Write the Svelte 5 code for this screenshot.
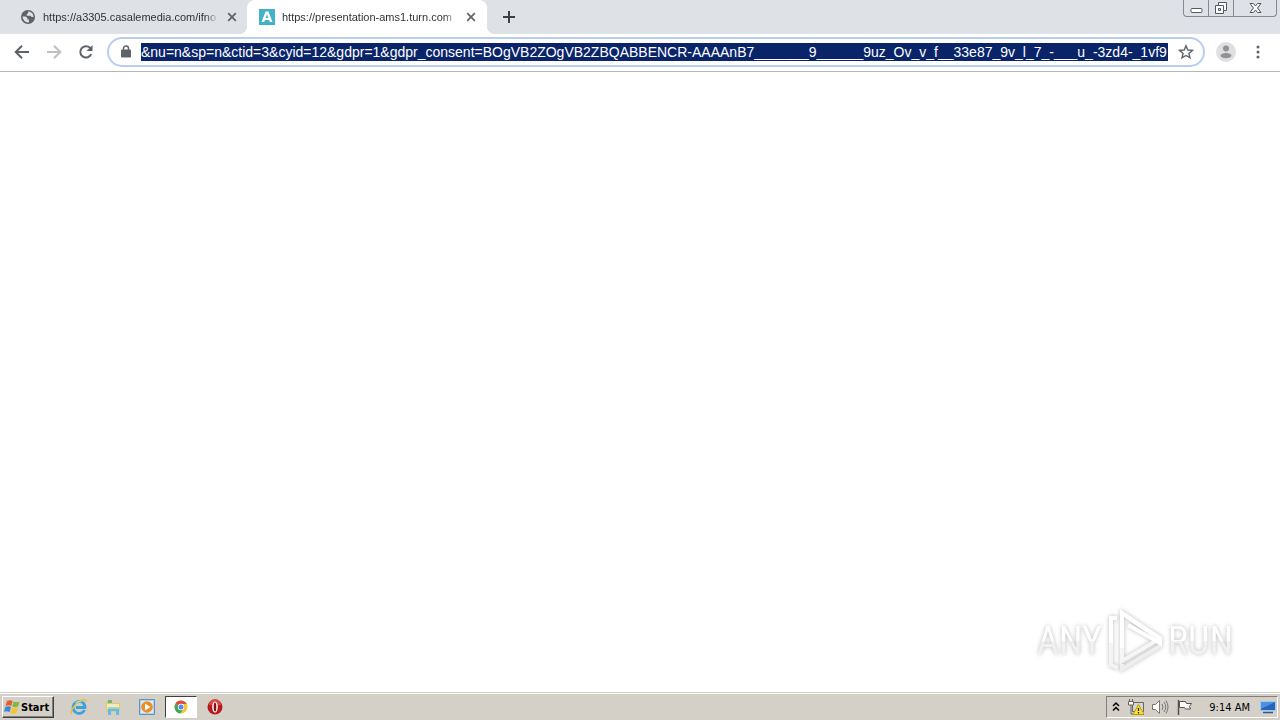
<script>
  const tabs = [
    { title: 'https://a3305.casalemedia.com/ifno', icon: 'globe', active: false },
    { title: 'https://presentation-ams1.turn.com', icon: 'a', active: true }
  ];
  let address = $state('&nu=n&sp=n&ctid=3&cyid=12&gdpr=1&gdpr_consent=BOgVB2ZOgVB2ZBQABBENCR-AAAAnB7_______9______9uz_Ov_v_f__33e87_9v_l_7_-___u_-3zd4-_1vf9');
</script>

<div class="screen">
  <header class="strip">
    <div class="tabs" role="tablist">
      {#each tabs as tab}
        <div class="tab" class:active={tab.active}>
          <button class="pick" role="tab" aria-selected={tab.active}>
            {#if tab.icon === 'globe'}
              <svg width="16" height="16" viewBox="0 0 16 16"><circle cx="8" cy="8" r="7" fill="#5f6368" /><path d="M2.5 7.5h3.2l1.7 1.6v1.5H9v2.7c-2.700.6-6-1.300-6.500-5.800zM8.200 2.500v1.400L6.800 5.200v1.500h3.700l1.100 1.200 1.900.2C13.600 4.700 10.900 2.500 8.200 2.500z" fill="#dee1e6" /></svg>
            {:else}
              <svg width="16" height="16" viewBox="0 0 16 16"><path d="M0 0h16v16H0z" fill="#43b1c9" /><path d="M6.600 2.500h2.800L13.500 13h-2.700l-.7-2H5.900l-.7 2H2.500zM8 5.300L6.700 9h2.600z" fill="#fff" fill-rule="evenodd" /></svg>
            {/if}
            <span class="title">{tab.title}</span>
          </button>
          <button class="close" aria-label="Close tab">
            <svg width="10" height="10" viewBox="0 0 10 10"><path d="M1.200 1.200l7.600 7.600M8.800 1.200L1.200 8.800" stroke="#5f6368" stroke-width="1.700" /></svg>
          </button>
        </div>
      {/each}
    </div>
    <button class="plain add" aria-label="New tab">
      <svg width="14" height="14" viewBox="0 0 14 14"><path d="M7 1v12M1 7h12" stroke="#3c4043" stroke-width="2" /></svg>
    </button>
    <div class="caption">
      <button aria-label="Minimize"><svg width="13" height="16" viewBox="0 0 13 16"><rect x="1" y="8.500" width="11" height="4" rx="1" fill="#fff" stroke="#555861" /></svg></button>
      <button aria-label="Restore"><svg width="14" height="16" viewBox="0 0 14 16"><path d="M4.500 2.500h8v8h-8z" fill="#fff" stroke="#555861" /><path d="M1.500 5.500h8v8h-8z" fill="#fff" stroke="#555861" /><path d="M4.500 8.500h2v2h-2z" fill="#dee1e6" stroke="#555861" /></svg></button>
      <button aria-label="Close"><svg width="13" height="16" viewBox="0 0 13 16"><path d="M1 3.500h3.500l2 2.500 2-2.500H12L8.500 8l3.500 4.500H8.500l-2-2.500-2 2.500H1L4.500 8z" fill="#fff" stroke="#555861" /></svg></button>
    </div>
  </header>

  <nav class="toolbar">
    <button class="plain" aria-label="Back"><svg width="16" height="16" viewBox="0 0 16 16"><path d="M15 8H2.500M8 1.700L1.700 8 8 14.300" fill="none" stroke="#5f6368" stroke-width="2" /></svg></button>
    <button class="plain" aria-label="Forward"><svg width="16" height="16" viewBox="0 0 16 16"><path d="M1 8h12.500M8 1.700L14.300 8 8 14.300" fill="none" stroke="#bdbfc2" stroke-width="2" /></svg></button>
    <button class="plain" aria-label="Reload"><svg width="16" height="16" viewBox="0 0 16 16"><path d="M13.200 10.200a5.700 5.700 0 1 1-1.100-6.300l1.400 1.500" fill="none" stroke="#5f6368" stroke-width="2" /><path d="M14.500 1v6h-6z" fill="#5f6368" /></svg></button>
    <div class="omnibox">
      <svg width="10" height="14" viewBox="0 0 10 14"><path d="M0.500 5h9v7h-9z" fill="#5f6368" stroke="#5f6368" stroke-linejoin="round" /><path d="M2.500 5V3.500a2.500 2.500 0 0 1 5 0V5" fill="none" stroke="#5f6368" stroke-width="1.500" /></svg>
      <input aria-label="Address" spellcheck="false" bind:value={address} />
      <button class="plain" aria-label="Bookmark"><svg width="16" height="16" viewBox="0 0 16 16"><path d="M8 1.800l1.800 4.200 4.600.4-3.500 3 1.100 4.500L8 11.500l-4 2.400 1.100-4.500-3.500-3L6.200 6z" fill="none" stroke="#5f6368" stroke-width="1.400" /></svg></button>
    </div>
    <button class="plain" aria-label="Profile"><svg width="20" height="20" viewBox="0 0 20 20"><circle cx="10" cy="10" r="10" fill="#dfdfe0" /><circle cx="10" cy="6.500" r="3" fill="#909295" /><path d="M4.500 14c0-4 11-4 11 0-2 3-9 3-11 0z" fill="#909295" /></svg></button>
    <button class="plain menu" aria-label="Menu"><svg width="4" height="16" viewBox="0 0 4 16" fill="#5f6368"><circle cx="2" cy="3" r="1.500" /><circle cx="2" cy="8" r="1.500" /><circle cx="2" cy="13" r="1.500" /></svg></button>
  </nav>

  <main>
    <div class="watermark" aria-label="ANY RUN">
      <span>ANY</span>
      <svg width="58" height="66" viewBox="0 0 58 66"><path d="M16 56v5l38-23v-6" fill="none" stroke="#eee" stroke-width="4" /><path d="M11 10H5v47l7 3" fill="none" stroke="#f4f4f4" stroke-width="4" /><path d="M16 5v48l37-22z" fill="none" stroke="#f6f6f6" stroke-width="4" /><path d="M5 35V10h6M16 40V5l38 25v5L22 17" fill="none" stroke="#fff" stroke-width="4" /></svg>
      <span>RUN</span>
    </div>
  </main>

  <footer class="taskbar">
    <button class="start">
      <svg width="17" height="16" viewBox="0 0 17 16"><path d="M3 2c2-1 4-1 5.500 0L7.300 7C5.500 6 3.500 6 1.500 7z" fill="#e85b2a" /><path d="M9.500 2.500c2 1 4 1 6 0L14 7.500c-2 1-4 1-5.700 0z" fill="#83b63c" /><path d="M1.300 8c2-1 4-1 5.700 0l-1.300 5c-2-1-4-1-5.700 0z" fill="#3d86d4" /><path d="M8 8.500c2 1 4 1 6 0L12.500 14c-2 1-4 1-6 0z" fill="#f8c332" /></svg>
      Start
    </button>
    <div class="apps">
      <button aria-label="Internet Explorer"><svg width="18" height="18" viewBox="0 0 18 18"><path d="M14.500 12A6 6 0 1 1 15 8.500v1H6" fill="none" stroke="#3ca2df" stroke-width="2.800" /><path d="M2 16c-3-2 3-10 8-13 3-2 7-2 6 1" fill="none" stroke="#efbd3d" stroke-width="1.500" /><path d="M5 5c2-2 5-2 7-1" fill="none" stroke="#a6dcf5" /></svg></button>
      <button aria-label="Explorer"><svg width="18" height="18" viewBox="0 0 18 18"><path d="M2 3h5l1 2h8v9H2z" fill="#e6ca69" /><path d="M4 2h4v3H4z" fill="#6bb886" /><path d="M3 6h12v5H3z" fill="#faebad" /><path d="M4 17v-6q0-2 2-2h7q2 0 2 2v6h-3v-4H7v4z" fill="#65bce2" /><path d="M5 10h9" stroke="#c1e8f7" /></svg></button>
      <button aria-label="Media Player"><svg width="18" height="18" viewBox="0 0 18 18"><path d="M1.500 1.500h15v15h-15z" fill="#a9d2f2" stroke="#5b94c7" /><path d="M3 3h12v12H3z" fill="#deeffa" /><circle cx="9" cy="9" r="5.800" fill="#f08c20" /><path d="M7 5.500v7L12.500 9z" fill="#fff" /></svg></button>
      <button class="pressed" aria-label="Chrome"><svg width="14" height="14" viewBox="0 0 14 14"><circle cx="7" cy="7" r="6.500" fill="#f7c72d" /><path d="M7 7L1.300 3.900A6.500 6.500 0 0 1 12.700 4H7z" fill="#df4d3b" /><path d="M7 7L1.300 3.900A6.500 6.500 0 0 0 6.300 13.500L9.500 8.500z" fill="#43a35c" /><circle cx="7" cy="7" r="3.200" fill="#fff" /><circle cx="7" cy="7" r="2.500" fill="#4b8df0" /></svg></button>
      <button aria-label="Opera"><svg width="16" height="16" viewBox="0 0 16 16"><circle cx="8" cy="8" r="7.500" fill="#b91a1d" /><path d="M2 6a6 6 0 0 1 12 0" fill="#d94843" /><ellipse cx="8" cy="8" rx="2.800" ry="5.500" fill="#fff" /><ellipse cx="8" cy="8" rx="1.300" ry="4.500" fill="#8b1014" /></svg></button>
    </div>
    <div class="tray">
      <button class="plain" aria-label="Show hidden icons"><svg width="8" height="12" viewBox="0 0 8 12"><path d="M1 5l3-3 3 3M1 9.500l3-3 3 3" fill="none" stroke="#000" stroke-width="1.500" /></svg></button>
      <button class="plain" aria-label="Network"><svg width="16" height="16" viewBox="0 0 16 16"><path d="M4.500 3.500h11v9h-11z" fill="#d5d5d2" stroke="#66665f" /><path d="M1.500 0v2M4.500 0v2M3 6v9h6" fill="none" stroke="#66665f" /><path d="M.5 2.500h5v3.500h-5z" fill="#fff" stroke="#66665f" /><path d="M10.500 5.500L16 15.500H5z" fill="#ffe02e" stroke="#b89610" /><path d="M10.500 9v3M10.500 13v1.500" stroke="#222" stroke-width="1.300" /></svg></button>
      <button class="plain" aria-label="Volume"><svg width="17" height="16" viewBox="0 0 17 16"><path d="M.5 5.500h3l4-4v13l-4-4h-3z" fill="#fff" stroke="#77756f" /><path d="M10 5q2 3 0 6M12 3q3.500 5 0 10M14 1.500q4 6.500 0 13" fill="none" stroke="#77756f" /></svg></button>
      <button class="plain" aria-label="Action Center"><svg width="16" height="16" viewBox="0 0 16 16"><path d="M2.500 2.500h6l1 2h5l-2 3 1 2.500h-5l-1-1.500h-5z" fill="#fff" stroke="#55534e" /><path d="M1.500 1v15" stroke="#55534e" stroke-width="1.500" /></svg></button>
      <time>9:14 AM</time>
      <button class="plain" aria-label="Show desktop"><svg width="16" height="14" viewBox="0 0 16 14"><path d="M.5 1.500h15v9H.5z" fill="#2465bd" stroke="#9ec9ef" /><path d="M1 2h14L1 9z" fill="#4d92dc" /><path d="M3 12.500h10" stroke="#315783" stroke-width="1.500" /></svg></button>
    </div>
  </footer>
</div>

<style>
  :global(body) { margin: 0; }
  .screen { min-height: 100vh; display: flex; flex-direction: column; background: #fff; color: #000; font-family: "DejaVu Sans Condensed", "DejaVu Sans", sans-serif; font-stretch: condensed; font-size: 11px; }
  button, input { font: inherit; color: inherit; margin: 0; padding: 0; border: 0; border-radius: 0; background: none; box-sizing: border-box; }
  svg { display: block; flex: none; }
  .plain { display: flex; align-items: center; justify-content: center; }
  .strip { display: flex; height: 34px; background: #dee1e6; }
  .tabs { display: flex; padding-left: 8px; }
  .tab { display: flex; align-items: center; width: 240px; height: 34px; padding: 0 11px 0 12px; box-sizing: border-box; gap: 8px; color: #303336; position: relative; }
  .tab.active { background: #fff; border-radius: 8px 8px 0 0; margin-left: -1px; }
  .tab.active::before, .tab.active::after { content: ""; position: absolute; bottom: 0; width: 8px; height: 8px; }
  .tab.active::before { right: 100%; background: radial-gradient(circle at 0 0, transparent 8px, #fff 8px); }
  .tab.active::after { left: 100%; background: radial-gradient(circle at 100% 0, transparent 8px, #fff 8px); }
  .pick { flex: 1; min-width: 0; display: flex; align-items: center; gap: 7px; text-align: left; }
  .title { flex: 1; overflow: hidden; white-space: nowrap; font-family: "Liberation Sans", Arial, sans-serif; font-stretch: normal; line-height: 16px; mask-image: linear-gradient(to right, #000 92%, transparent); }
  .close { width: 10px; height: 10px; }
  .add { width: 28px; margin-left: 8px; }
  .caption { display: flex; height: 17px; margin: 0 3px 0 auto; border: 1px solid #868991; border-top: 0; border-radius: 0 0 4px 4px; box-sizing: border-box; }
  .caption button { width: 25px; display: flex; align-items: center; justify-content: center; border-right: 1px solid #868991; }
  .caption button:last-child { width: 42px; border: 0; }
  .toolbar { display: flex; align-items: center; height: 38px; box-sizing: border-box; border-bottom: 1px solid #b6b6b8; padding: 0 13px 1px 14px; gap: 16px; }
  .omnibox { flex: 1; min-width: 0; height: 30px; display: flex; align-items: center; gap: 10px; margin: 0 -5px 0 -3px; padding: 0 9px 0 12px; box-sizing: border-box; border: 2px solid #b9cdee; border-radius: 15px; }
  .omnibox input { flex: 1; min-width: 0; height: 18px; background: #0a246a; color: #fff; font-family: "Liberation Sans", Arial, sans-serif; font-size: 14px; outline: 0; }
  .menu { width: 18px; margin-left: -3px; }
  main { flex: 1; position: relative; }
  .watermark { position: absolute; right: 47px; bottom: 18px; display: flex; align-items: center; gap: 4px; font-family: Roboto, sans-serif; font-size: 38px; filter: drop-shadow(0 0 2px #bbb); }
  .watermark span { color: transparent; background: linear-gradient(#fff 50%, #f1f1f1 50%); background-clip: text; }
  .taskbar { display: flex; align-items: center; height: 28px; box-sizing: border-box; background: #d4d0c8; border-top: 1px solid #d4d0c8; box-shadow: inset 0 1px #fff; padding: 2px 2px 1px; }
  .start { display: flex; align-items: center; height: 22px; width: 52px; padding-left: 1px; font-weight: bold; border: 1px solid; border-color: #fff #404040 #404040 #fff; box-shadow: inset -1px -1px #808080; }
  .apps { display: flex; margin-left: 9px; gap: 2px; }
  .apps button { width: 32px; height: 22px; display: flex; align-items: center; justify-content: center; }
  .apps .pressed { background: #fff; border: 1px solid; border-color: #404040 #fff #fff #404040; }
  .tray { display: flex; align-items: center; gap: 8px; margin-left: auto; height: 22px; padding: 0 1px 0 5px; box-sizing: border-box; border: 1px solid; border-color: #808080 #fff #fff #808080; }
  time { margin: 0 2px 0 8px; }
</style>
